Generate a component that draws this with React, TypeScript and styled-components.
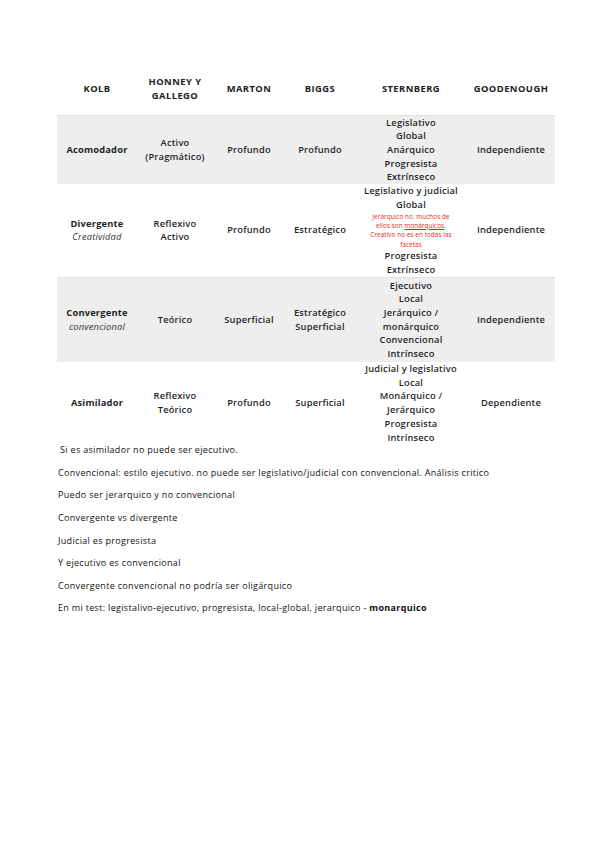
import styled, { createGlobalStyle } from "styled-components";

const GlobalStyle = createGlobalStyle`
  body {
    margin: 0;
    background: #fff;
    font-family: "Open Sans", "Noto Sans", sans-serif;
    color: #1c1c1c;
  }
`

const Page = styled.div`
  width: 599px;
  min-height: 848px;
  padding: 70px 0 0 57px;
  box-sizing: border-box;
`

const Table = styled.table`
  border-collapse: collapse;
  table-layout: fixed;
  width: 498px;
  & col.c1 { width: 80px; }
  & col.c2 { width: 76px; }
  & col.c3 { width: 72px; }
  & col.c4 { width: 70px; }
  & col.c5 { width: 112px; }
  & col.c6 { width: 88px; }
`

const HeadRow = styled.tr`
  height: 45px;
`

const HeadCell = styled.th`
  padding: 0 0 6px;
  font-size: 9.4px;
  line-height: 14px;
  font-weight: 700;
  letter-spacing: 0.45px;
  text-align: center;
  vertical-align: middle;
  color: #222;
`

const Row = styled.tr<{ $shaded?: boolean; $h: number }>`
  height: ${p => p.$h}px;
  background: ${p => p.$shaded ? "#eeeeee" : "#fff"};
  border-top: ${p => p.$shaded ? "1px solid #e0e0e0" : "none"};
`

const Cell = styled.td<{ $strong?: boolean }>`
  padding: 0;
  font-size: 9.3px;
  line-height: 13.7px;
  letter-spacing: 0.2px;
  font-weight: ${p => p.$strong ? 700 : 600};
  text-align: center;
  vertical-align: middle;
  color: #1f1f1f;
  & em {
    font-weight: 400;
    font-style: italic;
    color: #333;
  }
`

const Note = styled.div`
  color: #ee1c1c;
  font-size: 6.3px;
  line-height: 9.3px;
  font-weight: 400;
  letter-spacing: 0.1px;
  & u { text-decoration: underline; }
`

const Notes = styled.div`
  padding-top: 0;
`

const Para = styled.p<{ $indent?: boolean }>`
  margin: 0 0 10.6px;
  padding-left: ${p => p.$indent ? "3px" : "1px"};
  font-size: 9px;
  line-height: 12px;
  color: #111;
  letter-spacing: 0.32px;
  & b { font-weight: 700; }
`

const lines = (items: string[]) => items.map((t, i) => <div key={i}>{t}</div>)

const App = () => {
  return (
    <Page>
      <GlobalStyle />
      <Table>
        <colgroup>
          <col className="c1" /><col className="c2" /><col className="c3" />
          <col className="c4" /><col className="c5" /><col className="c6" />
        </colgroup>
        <thead>
          <HeadRow>
            <HeadCell>KOLB</HeadCell>
            <HeadCell>HONNEY Y<br />GALLEGO</HeadCell>
            <HeadCell>MARTON</HeadCell>
            <HeadCell>BIGGS</HeadCell>
            <HeadCell>STERNBERG</HeadCell>
            <HeadCell>GOODENOUGH</HeadCell>
          </HeadRow>
        </thead>
        <tbody>
          <Row $shaded $h={68}>
            <Cell $strong>Acomodador</Cell>
            <Cell>Activo<br />(Pragmático)</Cell>
            <Cell>Profundo</Cell>
            <Cell>Profundo</Cell>
            <Cell>{lines(["Legislativo", "Global", "Anárquico", "Progresista", "Extrínseco"])}</Cell>
            <Cell>Independiente</Cell>
          </Row>
          <Row $h={93}>
            <Cell $strong>Divergente<br /><em>Creatividad</em></Cell>
            <Cell>Reflexivo<br />Activo</Cell>
            <Cell>Profundo</Cell>
            <Cell>Estratégico</Cell>
            <Cell>
              <div>Legislativo y judicial</div>
              <div>Global</div>
              <Note>
                Jerárquico no, muchos de<br />
                ellos son <u>monárquicos</u>.<br />
                Creativo no es en todas las<br />
                facetas
              </Note>
              <div>Progresista</div>
              <div>Extrínseco</div>
            </Cell>
            <Cell>Independiente</Cell>
          </Row>
          <Row $shaded $h={85}>
            <Cell $strong>Convergente<br /><em>convencional</em></Cell>
            <Cell>Teórico</Cell>
            <Cell>Superficial</Cell>
            <Cell>Estratégico<br />Superficial</Cell>
            <Cell>{lines(["Ejecutivo", "Local", "Jerárquico /", "monárquico", "Convencional", "Intrínseco"])}</Cell>
            <Cell>Independiente</Cell>
          </Row>
          <Row $h={80}>
            <Cell $strong>Asimilador</Cell>
            <Cell>Reflexivo<br />Teórico</Cell>
            <Cell>Profundo</Cell>
            <Cell>Superficial</Cell>
            <Cell>{lines(["Judicial y legislativo", "Local", "Monárquico /", "Jerárquico", "Progresista", "Intrínseco"])}</Cell>
            <Cell>Dependiente</Cell>
          </Row>
        </tbody>
      </Table>
      <Notes>
        <Para $indent>Si es asimilador no puede ser ejecutivo.</Para>
        <Para>Convencional: estilo ejecutivo. no puede ser legislativo/judicial con convencional. Análisis critico</Para>
        <Para>Puedo ser jerarquico y no convencional</Para>
        <Para>Convergente vs divergente</Para>
        <Para>Judicial es progresista</Para>
        <Para>Y ejecutivo es convencional</Para>
        <Para>Convergente convencional no podría ser oligárquico</Para>
        <Para>En mi test: legistalivo-ejecutivo, progresista, local-global, jerarquico - <b>monarquico</b></Para>
      </Notes>
    </Page>
  )
}

export default App;
